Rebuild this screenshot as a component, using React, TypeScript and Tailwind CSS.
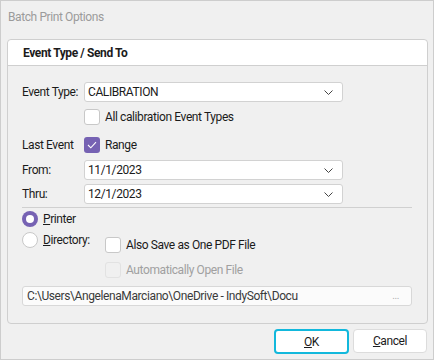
import React from 'react';

const font = { fontFamily: 'Roboto, "Noto Sans", sans-serif' };

const Chevron: React.FC = () => (
  <svg width="9" height="5" viewBox="0 0 9 5" className="shrink-0">
    <path d="M0.5 0.5 L4.5 4.5 L8.5 0.5" fill="none" stroke="#444" strokeWidth="1" />
  </svg>
);

const Dropdown: React.FC<{ value: string }> = ({ value }) => (
  <div className="flex h-[20px] w-[259px] items-center justify-between rounded-[3px] border border-[#d2d2d2] bg-white pl-[3px] pr-[9px]">
    <span>{value}</span>
    <Chevron />
  </div>
);

const CheckBox: React.FC<{ checked?: boolean; disabled?: boolean }> = ({ checked, disabled }) => {
  if (checked) {
    return (
      <div className="flex h-[16px] w-[16px] shrink-0 items-center justify-center rounded-[3px] bg-[#7662b3]">
        <svg width="10" height="8" viewBox="0 0 10 8">
          <path d="M1 4 L3.8 6.8 L9 1.2" fill="none" stroke="white" strokeWidth="1.1" />
        </svg>
      </div>
    );
  }
  return (
    <div
      className={
        disabled
          ? 'h-[16px] w-[16px] shrink-0 rounded-[3px] border border-[#e2e2e2] bg-[#f0f0f0]'
          : 'h-[16px] w-[16px] shrink-0 rounded-[3px] border border-[#c8c8c8] bg-white'
      }
    />
  );
};

const Radio: React.FC<{ selected?: boolean }> = ({ selected }) =>
  selected ? (
    <div className="flex h-[16px] w-[16px] shrink-0 items-center justify-center rounded-full bg-[#7662b3]">
      <div className="h-[8px] w-[8px] rounded-full bg-white" />
    </div>
  ) : (
    <div className="h-[16px] w-[16px] shrink-0 rounded-full border border-[#c8c8c8] bg-white" />
  );

export default function App() {
  return (
    <div
      style={font}
      className="flex h-[360px] w-[434px] flex-col whitespace-nowrap border border-[#cdcdcd] bg-[#f0f0f0] text-[12px] leading-[16px] tracking-[-0.4px] text-[#1b1b1b]"
    >
      <div className="flex h-[38px] shrink-0 items-start pl-[7px] pt-[8px] text-[#9b9b9b]">Batch Print Options</div>

      <div className="ml-[6px] flex h-[285px] w-[421px] flex-col rounded-[4px] border border-[#cfcfcf] bg-[#f0f0f0]">
        <div className="flex h-[26px] items-center rounded-t-[4px] border-b border-[#cfcfcf] bg-white pl-[15px] font-bold">
          Event Type / Send To
        </div>

        <div className="flex flex-col pl-[14px] pr-[14px] pt-[16px]">
          <div className="flex h-[20px] items-center">
            <span className="w-[62px] shrink-0">Event Type:</span>
            <Dropdown value="CALIBRATION" />
          </div>

          <div className="mt-[7px] flex h-[16px] items-center gap-[5px] pl-[62px]">
            <CheckBox />
            <span>All calibration Event Types</span>
          </div>

          <div className="mt-[12px] flex h-[16px] items-center">
            <span className="w-[62px] shrink-0">Last Event</span>
            <CheckBox checked />
            <span className="ml-[5px]">Range</span>
          </div>

          <div className="mt-[7px] flex h-[20px] items-center">
            <span className="w-[62px] shrink-0">From:</span>
            <Dropdown value="11/1/2023" />
          </div>

          <div className="mt-[4px] flex h-[20px] items-center">
            <span className="w-[62px] shrink-0">Thru:</span>
            <Dropdown value="12/1/2023" />
          </div>

          <div className="mt-[3px] h-px w-[390px] bg-[#d0d0d0]" />

          <div className="mt-[3px] flex h-[16px] items-center gap-[5px]">
            <Radio selected />
            <span>
              <span className="underline">P</span>rinter
            </span>
          </div>

          <div className="mt-[5px] flex">
            <div className="flex h-[16px] w-[83px] shrink-0 items-center gap-[5px]">
              <Radio />
              <span>
                <span className="underline">D</span>irectory:
              </span>
            </div>
            <div className="flex flex-col pt-[5px]">
              <div className="flex h-[16px] items-center gap-[5px]">
                <CheckBox />
                <span>Also Save as One PDF File</span>
              </div>
              <div className="mt-[9px] flex h-[16px] items-center gap-[5px] text-[#a0a0a0]">
                <CheckBox disabled />
                <span>Automatically Open File</span>
              </div>
            </div>
          </div>

          <div className="mt-[8px] flex h-[20px] w-[390px] items-center justify-between rounded-[3px] border border-[#d8d8d8] bg-[#fbfbfb] pl-[4px] pr-[12px]">
            <span className="text-[#3a3a3a]">C:\Users\AngelenaMarciano\OneDrive - IndySoft\Docu</span>
            <span className="text-[10px] text-[#b0b0b0]">...</span>
          </div>
        </div>
      </div>

      <div className="mt-[5px] flex justify-end gap-[4px] pr-[6px]">
        <button className="flex h-[25px] w-[75px] items-center justify-center rounded-[4px] border-2 border-[#12b8dc] bg-white">
          <span>
            <span className="underline">O</span>K
          </span>
        </button>
        <button className="flex h-[24px] w-[74px] items-center justify-center rounded-[4px] border border-[#dcdcdc] bg-white">
          <span>
            <span className="underline">C</span>ancel
          </span>
        </button>
      </div>
    </div>
  );
}
